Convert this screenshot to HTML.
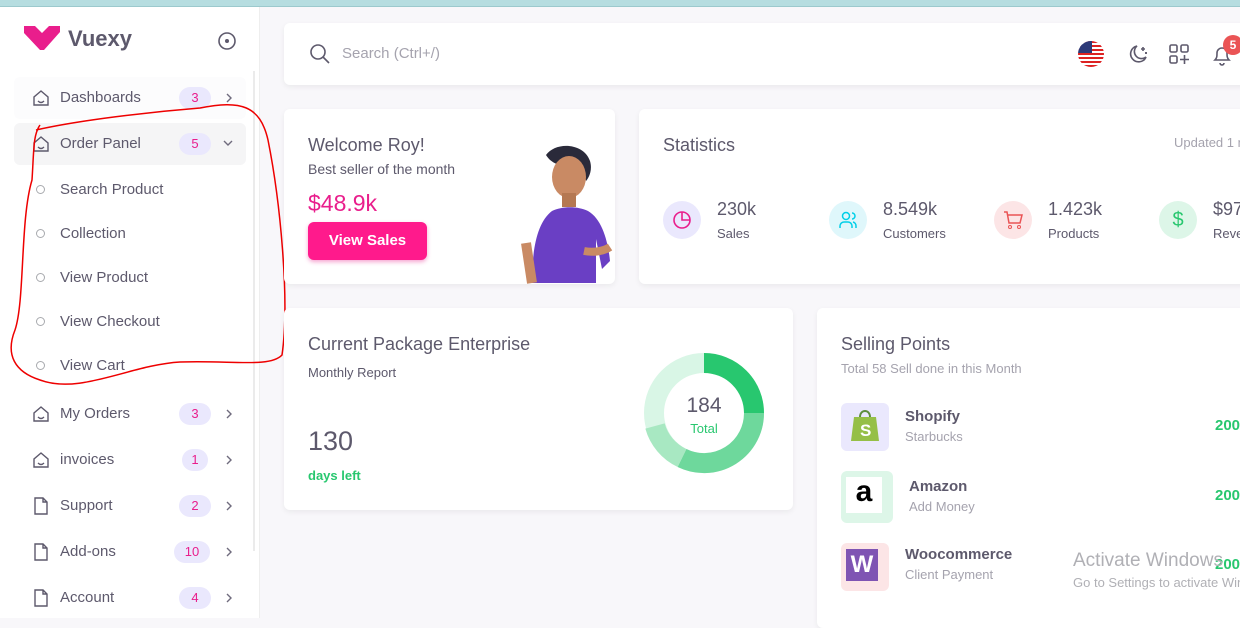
<!DOCTYPE html>
<html><head><meta charset="utf-8"><style>
*{box-sizing:border-box;margin:0;padding:0}
body{width:1240px;height:618px;overflow:hidden;background:#f8f7fa;font-family:"Liberation Sans",sans-serif;color:#5d596c;position:relative}
.top{position:absolute;left:0;top:0;width:1240px;height:7px;background:#b6dde0;border-bottom:1px solid #9cc9cd}
.side{position:absolute;left:0;top:7px;width:260px;height:611px;background:#fff;border-right:1px solid #eee}
.abs{position:absolute}
.nav{position:absolute;left:14px;width:232px;height:42px;border-radius:6px;font-size:15px;color:#5d596c}
.nav .t{position:absolute;left:46px;top:12px}
.nav .b{position:absolute;left:165px;top:10px;height:22px;min-width:32px;border-radius:11px;background:#eae8fd;color:#e91e8c;font-size:13px;text-align:center;line-height:22px;padding:0 8px}
.nav svg{position:absolute;left:18px;top:12px}
.nav svg.ar{left:auto;right:12px;top:15px}
.sub{position:absolute;left:14px;font-size:15px;color:#5d596c}
.sub i{position:absolute;left:22px;top:4px;width:9px;height:9px;border:1.5px solid #a8aaae;border-radius:50%}
.sub span{position:absolute;left:46px;top:0;white-space:nowrap}
.card{position:absolute;background:#fff;border-radius:6px;box-shadow:0 2px 6px rgba(0,0,0,.06)}
.g{color:#a5a3ae}
</style></head><body>
<div class="top"></div>
<div class="side">
 <svg class="abs" style="left:24px;top:19px" width="36" height="26" viewBox="0 0 36 26"><path d="M0 0h11l7 7 7-7h11v6L20 24h-4L0 7z" fill="#e91e8c"/></svg>
 <div class="abs" style="left:68px;top:19px;font-size:22px;font-weight:bold;color:#5d596c">Vuexy</div>
 <svg class="abs" style="left:217px;top:24px" width="20" height="20"><circle cx="10" cy="10" r="8" fill="none" stroke="#5d596c" stroke-width="1.6"/><circle cx="10" cy="10" r="2" fill="#5d596c"/></svg>
 <div class="abs" style="left:253px;top:64px;width:2px;height:480px;background:#ebebeb"></div>
 <div class="nav" style="top:70px;background:#fcfcfd"><svg width="18" height="18" viewBox="0 0 18 18"><path d="M2 16V8L9 2l7 6v8z M6 12q3 3 6 0" fill="none" stroke="#5d596c" stroke-width="1.4"/></svg><span class="t">Dashboards</span><span class="b">3</span><svg class="ar" width="10" height="12"><path d="M3 2l4 4-4 4" fill="none" stroke="#6f6b7d" stroke-width="1.4"/></svg></div>
 <div class="nav" style="top:116px;background:#f5f5f6"><svg width="18" height="18" viewBox="0 0 18 18"><path d="M2 16V8L9 2l7 6v8z M6 12q3 3 6 0" fill="none" stroke="#5d596c" stroke-width="1.4"/></svg><span class="t">Order Panel</span><span class="b">5</span><svg class="ar" width="12" height="10"><path d="M2 3l4 4 4-4" fill="none" stroke="#6f6b7d" stroke-width="1.4"/></svg></div>
 <div class="sub" style="top:174px"><i></i><span>Search Product</span></div>
 <div class="sub" style="top:218px"><i></i><span>Collection</span></div>
 <div class="sub" style="top:262px"><i></i><span>View Product</span></div>
 <div class="sub" style="top:306px"><i></i><span>View Checkout</span></div>
 <div class="sub" style="top:350px"><i></i><span>View Cart</span></div>
 <div class="nav" style="top:386px"><svg width="18" height="18" viewBox="0 0 18 18"><path d="M2 16V8L9 2l7 6v8z M6 12q3 3 6 0" fill="none" stroke="#5d596c" stroke-width="1.4"/></svg><span class="t">My Orders</span><span class="b">3</span><svg class="ar" width="10" height="12"><path d="M3 2l4 4-4 4" fill="none" stroke="#6f6b7d" stroke-width="1.4"/></svg></div>
 <div class="nav" style="top:432px"><svg width="18" height="18" viewBox="0 0 18 18"><path d="M2 16V8L9 2l7 6v8z M6 12q3 3 6 0" fill="none" stroke="#5d596c" stroke-width="1.4"/></svg><span class="t">invoices</span><span class="b" style="left:168px;min-width:26px">1</span><svg class="ar" width="10" height="12"><path d="M3 2l4 4-4 4" fill="none" stroke="#6f6b7d" stroke-width="1.4"/></svg></div>
 <div class="nav" style="top:478px"><svg width="18" height="18" viewBox="0 0 18 18"><path d="M3 1h8l4 4v12H3z M11 1v4h4" fill="none" stroke="#5d596c" stroke-width="1.4"/></svg><span class="t">Support</span><span class="b">2</span><svg class="ar" width="10" height="12"><path d="M3 2l4 4-4 4" fill="none" stroke="#6f6b7d" stroke-width="1.4"/></svg></div>
 <div class="nav" style="top:524px"><svg width="18" height="18" viewBox="0 0 18 18"><path d="M3 1h8l4 4v12H3z M11 1v4h4" fill="none" stroke="#5d596c" stroke-width="1.4"/></svg><span class="t">Add-ons</span><span class="b" style="left:160px;min-width:36px">10</span><svg class="ar" width="10" height="12"><path d="M3 2l4 4-4 4" fill="none" stroke="#6f6b7d" stroke-width="1.4"/></svg></div>
 <div class="nav" style="top:570px"><svg width="18" height="18" viewBox="0 0 18 18"><path d="M3 1h8l4 4v12H3z M11 1v4h4" fill="none" stroke="#5d596c" stroke-width="1.4"/></svg><span class="t">Account</span><span class="b">4</span><svg class="ar" width="10" height="12"><path d="M3 2l4 4-4 4" fill="none" stroke="#6f6b7d" stroke-width="1.4"/></svg></div>
</div>
<svg class="abs" style="left:0;top:0" width="300" height="400"><path d="M36 130 C80 120 150 112 200 108 C240 100 260 105 268 140 C280 200 290 300 282 355 C270 368 230 360 180 362 C130 365 80 395 40 380 C15 372 5 355 15 330 C25 300 20 220 32 180 C34 150 33 135 40 125" fill="none" stroke="#e00" stroke-width="1.5"/></svg>

<div class="card" style="left:284px;top:23px;width:980px;height:62px">
 <svg class="abs" style="left:25px;top:20px" width="22" height="22"><circle cx="9" cy="9" r="7" fill="none" stroke="#5d596c" stroke-width="1.6"/><path d="M14 14l6 6" stroke="#5d596c" stroke-width="1.6"/></svg>
 <div class="abs g" style="left:58px;top:22px;font-size:15px">Search (Ctrl+/)</div>
 <svg class="abs" style="left:794px;top:18px" width="26" height="26" viewBox="0 0 26 26"><clipPath id="c"><circle cx="13" cy="13" r="13"/></clipPath><g clip-path="url(#c)"><rect width="26" height="26" fill="#fff"/><rect y="0" width="26" height="2" fill="#d22"/><rect y="4" width="26" height="2" fill="#d22"/><rect y="8" width="26" height="2" fill="#d22"/><rect y="12" width="26" height="2" fill="#d22"/><rect y="16" width="26" height="2" fill="#d22"/><rect y="20" width="26" height="2" fill="#d22"/><rect y="24" width="26" height="2" fill="#d22"/><rect width="14" height="12" fill="#2d3a78"/></g></svg>
 <svg class="abs" style="left:842px;top:20px" width="24" height="24" viewBox="0 0 24 24"><path d="M11 3a8 8 0 1 0 9 11A7 7 0 0 1 11 3z M17 4v4M15 6h4M20 9v2M19 10h2" fill="none" stroke="#5d596c" stroke-width="1.6"/></svg>
 <svg class="abs" style="left:884px;top:20px" width="22" height="22"><rect x="2" y="2" width="7" height="7" rx="1.5" fill="none" stroke="#5d596c" stroke-width="1.6"/><rect x="13" y="2" width="7" height="7" rx="1.5" fill="none" stroke="#5d596c" stroke-width="1.6"/><rect x="2" y="13" width="7" height="7" rx="1.5" fill="none" stroke="#5d596c" stroke-width="1.6"/><path d="M16.5 12v9M12 16.5h9" stroke="#5d596c" stroke-width="1.6"/></svg>
 <svg class="abs" style="left:926px;top:20px" width="24" height="24"><path d="M5 17h14c-2-2-2-4-2-7a5 5 0 0 0-10 0c0 3 0 5-2 7z M10 20a2 2 0 0 0 4 0" fill="none" stroke="#5d596c" stroke-width="1.6"/></svg>
 <div class="abs" style="left:939px;top:12px;width:20px;height:20px;border-radius:50%;background:#ea5455;color:#fff;font-size:12px;font-weight:bold;text-align:center;line-height:20px">5</div>
</div>

<div class="card" style="left:284px;top:109px;width:331px;height:175px">
 <div class="abs" style="left:24px;top:26px;font-size:18px">Welcome Roy!</div>
 <div class="abs" style="left:24px;top:52px;font-size:14px">Best seller of the month</div>
 <div class="abs" style="left:24px;top:81px;font-size:23px;color:#e91e8c">$48.9k</div>
 <div class="abs" style="left:24px;top:113px;width:119px;height:38px;border-radius:6px;background:#ff1a8c;color:#fff;font-size:15px;font-weight:bold;text-align:center;line-height:38px;box-shadow:0 2px 4px rgba(233,30,140,.4)">View Sales</div>
 <svg class="abs" style="left:230px;top:34px" width="110" height="141"><path d="M32 12c10-14 38-12 44 6 3 10-2 18-4 20-2-8-6-14-14-16-8 2-20 0-26-10z" fill="#2a2a3a"/><ellipse cx="55" cy="34" rx="17" ry="21" fill="#c98a64"/><rect x="48" y="50" width="14" height="14" fill="#b57852"/><path d="M18 140c0-30 4-60 20-72 10-5 26-5 36 0 14 8 20 30 22 50l-8 8-6-30 0 44z" fill="#6a3fc4"/><path d="M70 108c10 2 20 0 26-4" stroke="#c98a64" stroke-width="8"/><path d="M18 140l-6-40" stroke="#c98a64" stroke-width="10"/></svg>
</div>

<div class="card" style="left:639px;top:109px;width:620px;height:175px">
 <div class="abs" style="left:24px;top:26px;font-size:18px">Statistics</div>
 <div class="abs g" style="left:535px;top:26px;font-size:13px;white-space:nowrap">Updated 1 month ago</div>
 <div class="abs" style="left:24px;top:92px;width:38px;height:38px;border-radius:50%;background:#eae8fd"></div>
 <svg class="abs" style="left:33px;top:101px" width="20" height="20"><circle cx="10" cy="10" r="8" fill="none" stroke="#e91e8c" stroke-width="1.6"/><path d="M10 2v8h8" fill="none" stroke="#e91e8c" stroke-width="1.6"/></svg>
 <div class="abs" style="left:78px;top:90px;font-size:18px">230k</div><div class="abs" style="left:78px;top:117px;font-size:13px">Sales</div>
 <div class="abs" style="left:190px;top:92px;width:38px;height:38px;border-radius:50%;background:#dff7fb"></div>
 <svg class="abs" style="left:199px;top:101px" width="20" height="20"><circle cx="8" cy="6" r="3.5" fill="none" stroke="#00cfe8" stroke-width="1.5"/><path d="M2 18v-2a4 4 0 0 1 4-4h4a4 4 0 0 1 4 4v2M14 3a3 3 0 0 1 0 6M18 18v-2a4 4 0 0 0-3-4" fill="none" stroke="#00cfe8" stroke-width="1.5"/></svg>
 <div class="abs" style="left:244px;top:90px;font-size:18px">8.549k</div><div class="abs" style="left:244px;top:117px;font-size:13px">Customers</div>
 <div class="abs" style="left:355px;top:92px;width:38px;height:38px;border-radius:50%;background:#fce5e6"></div>
 <svg class="abs" style="left:364px;top:101px" width="20" height="20"><path d="M1 2h3l2 11h11l2-8H5" fill="none" stroke="#ea5455" stroke-width="1.5"/><circle cx="7" cy="17" r="1.5" fill="none" stroke="#ea5455"/><circle cx="16" cy="17" r="1.5" fill="none" stroke="#ea5455"/></svg>
 <div class="abs" style="left:409px;top:90px;font-size:18px">1.423k</div><div class="abs" style="left:409px;top:117px;font-size:13px">Products</div>
 <div class="abs" style="left:520px;top:92px;width:38px;height:38px;border-radius:50%;background:#ddf6e8;color:#28c76f;font-size:20px;text-align:center;line-height:38px">$</div>
 <div class="abs" style="left:574px;top:90px;font-size:18px">$9745</div><div class="abs" style="left:574px;top:117px;font-size:13px">Revenue</div>
</div>

<div class="card" style="left:284px;top:308px;width:509px;height:202px">
 <div class="abs" style="left:24px;top:26px;font-size:18px">Current Package Enterprise</div>
 <div class="abs" style="left:24px;top:57px;font-size:13px">Monthly Report</div>
 <div class="abs" style="left:24px;top:118px;font-size:27px">130</div>
 <div class="abs" style="left:24px;top:160px;font-size:13px;font-weight:bold;color:#28c76f">days left</div>
 <svg class="abs" style="left:358px;top:43px" width="124" height="124" viewBox="0 0 124 124"><circle cx="62" cy="62" r="50" fill="none" stroke="#d9f6e6" stroke-width="20"/><path d="M62 12A50 50 0 0 1 112 62" fill="none" stroke="#28c76f" stroke-width="20"/><path d="M112 62A50 50 0 0 1 40 107" fill="none" stroke="#6ed89c" stroke-width="20"/><path d="M40 107A50 50 0 0 1 13 75" fill="none" stroke="#a8e8c2" stroke-width="20"/></svg>
 <div class="abs" style="left:358px;top:86px;width:124px;text-align:center;font-size:21px">184</div>
 <div class="abs" style="left:358px;top:113px;width:124px;text-align:center;font-size:13px;color:#28c76f">Total</div>
</div>

<div class="card" style="left:817px;top:308px;width:450px;height:320px">
 <div class="abs" style="left:24px;top:26px;font-size:18px">Selling Points</div>
 <div class="abs g" style="left:24px;top:53px;font-size:13px">Total 58 Sell done in this Month</div>
 <div class="abs" style="left:24px;top:95px;width:48px;height:48px;border-radius:6px;background:#eae8fd"></div>
 <svg class="abs" style="left:33px;top:101px" width="30" height="34"><path d="M4 8h22l3 24H1z" fill="#95bf47"/><path d="M10 8c0-8 10-8 10 0" fill="none" stroke="#5e8e3e" stroke-width="2"/><text x="10" y="27" font-size="17" font-weight="bold" fill="#fff" font-family="Liberation Sans">S</text></svg>
 <div class="abs" style="left:88px;top:100px;font-size:15px;font-weight:bold">Shopify</div><div class="abs g" style="left:88px;top:121px;font-size:13px">Starbucks</div>
 <div class="abs" style="left:24px;top:163px;width:52px;height:52px;border-radius:6px;background:#ddf6e8"></div>
 <div class="abs" style="left:29px;top:169px;width:36px;height:36px;background:#fff;font-size:30px;font-weight:bold;color:#000;text-align:center;line-height:30px">a</div>
 <div class="abs" style="left:92px;top:170px;font-size:15px;font-weight:bold">Amazon</div><div class="abs g" style="left:92px;top:191px;font-size:13px">Add Money</div>
 <div class="abs" style="left:24px;top:235px;width:48px;height:48px;border-radius:6px;background:#fce5e6"></div>
 <div class="abs" style="left:29px;top:241px;width:32px;height:32px;background:#7f54b3;color:#fff;font-size:24px;font-weight:bold;text-align:center;line-height:32px">W</div>
 <div class="abs" style="left:88px;top:238px;font-size:15px;font-weight:bold">Woocommerce</div><div class="abs g" style="left:88px;top:259px;font-size:13px">Client Payment</div>
 <div class="abs" style="left:398px;top:109px;font-size:15px;font-weight:bold;color:#28c76f">200</div>
 <div class="abs" style="left:398px;top:179px;font-size:15px;font-weight:bold;color:#28c76f">200</div>
 <div class="abs" style="left:398px;top:248px;font-size:15px;font-weight:bold;color:#28c76f">200</div>
</div>
<div class="abs" style="left:1073px;top:550px;font-size:19px;color:#b0b0b5;white-space:nowrap">Activate Windows</div>
<div class="abs" style="left:1073px;top:575px;font-size:13px;color:#b0b0b5;white-space:nowrap">Go to Settings to activate Windows.</div>
</body></html>
